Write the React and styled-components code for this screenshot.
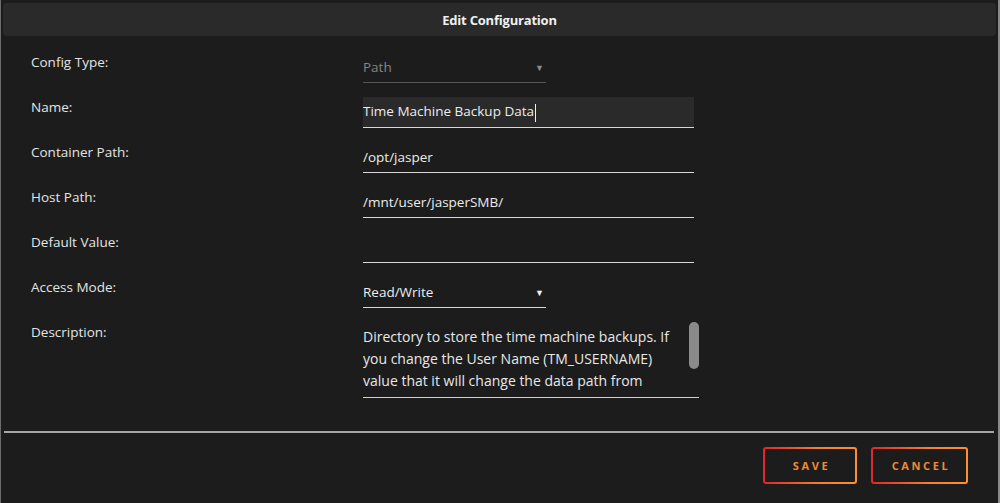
import React from 'react'
import styled, { createGlobalStyle } from 'styled-components'

const GlobalStyle = createGlobalStyle`
  html, body {
    margin: 0;
    padding: 0;
    background: #1c1c1c;
  }
  body {
    font-family: "Open Sans", "Noto Sans", sans-serif;
  }
`

const Dialog = styled.div`
  width: 1000px;
  height: 503px;
  box-sizing: border-box;
  border-left: 1px solid #6c6c6c;
  border-right: 2px solid #8a8a8a;
  background: #1c1c1c;
  padding: 3px 2px 0 2px;
  display: flex;
  flex-direction: column;
`

const TitleBar = styled.div`
  height: 33px;
  flex-shrink: 0;
  background: #2a2a2a;
  border-radius: 4px;
  display: flex;
  align-items: center;
  justify-content: center;
  color: #f0f0f0;
  font-size: 13px;
  font-weight: 700;
  letter-spacing: -0.2px;
`

const Form = styled.div`
  padding: 16px 0 0 28px;
  display: flex;
  flex-direction: column;
  gap: 14px;
  height: 395px;
  flex-shrink: 0;
  box-sizing: border-box;
`

const Row = styled.div`
  display: grid;
  grid-template-columns: 332px 1fr;
  align-items: start;
`

const Label = styled.div`
  color: #e4e4e4;
  font-size: 13.5px;
  line-height: 20px;
`

const Field = styled.div`
  width: ${p => p.$w || 331}px;
  height: 31px;
  box-sizing: border-box;
  display: flex;
  align-items: center;
  justify-content: space-between;
  background: ${p => (p.$focus ? '#2a2a2a' : 'transparent')};
  border-bottom: ${p => (p.$disabled ? '1px solid #555' : '1px solid #d8d8d8')};
  color: ${p => (p.$disabled ? '#858585' : '#ececec')};
  font-size: 13.5px;
  padding-right: 2px;
`

const Caret = styled.span`
  display: inline-block;
  vertical-align: middle;
  width: 1px;
  height: 18px;
  background: #f0f0f0;
  margin-left: 1px;
`

const Arrow = styled.span`
  font-size: 9px;
  color: ${p => (p.$disabled ? '#8a8a8a' : '#f0f0f0')};
`

const TextArea = styled.div`
  position: relative;
  width: 336px;
  height: 76px;
  box-sizing: border-box;
  padding: 4px 22px 0 0;
  border-bottom: 1px solid #d0d0d0;
  color: #e8e8e8;
  font-size: 14px;
  line-height: 22px;
  overflow: hidden;
`

const Thumb = styled.div`
  position: absolute;
  right: 0;
  top: 0;
  width: 10px;
  height: 47px;
  border-radius: 5px;
  background: #8a8a8a;
`

const Divider = styled.div`
  height: 2px;
  flex-shrink: 0;
  background: #a6a6a6;
  margin: 0 2px 0 1px;
`

const Footer = styled.div`
  display: flex;
  justify-content: flex-end;
  gap: 14px;
  padding: 14px 28px 0 0;
`

const Button = styled.button`
  width: ${p => p.$w}px;
  height: 37px;
  box-sizing: border-box;
  border: 2px solid transparent;
  border-radius: 3px;
  background:
    linear-gradient(#1c1c1c, #1c1c1c) padding-box,
    linear-gradient(90deg, #e0262c, #f48030 60%, #ff8f30) border-box;
  color: #f08a38;
  font-family: "Open Sans", "Noto Sans", sans-serif;
  font-size: 11px;
  font-weight: 700;
  letter-spacing: 2.6px;
  padding: 0 0 0 3px;
  cursor: pointer;
`

const rows = [
  { label: 'Config Type:', value: 'Path', select: true, disabled: true, w: 183 },
  { label: 'Name:', value: 'Time Machine Backup Data', focus: true },
  { label: 'Container Path:', value: '/opt/jasper' },
  { label: 'Host Path:', value: '/mnt/user/jasperSMB/' },
  { label: 'Default Value:', value: '' },
  { label: 'Access Mode:', value: 'Read/Write', select: true, w: 183 },
]

export default function App() {
  return (
    <>
      <GlobalStyle />
      <Dialog>
        <TitleBar>Edit Configuration</TitleBar>
        <Form>
          {rows.map(r => (
            <Row key={r.label}>
              <Label>{r.label}</Label>
              <Field $w={r.w} $focus={r.focus} $disabled={r.disabled}>
                <span>
                  {r.value}
                  {r.focus && <Caret />}
                </span>
                {r.select && <Arrow $disabled={r.disabled}>▼</Arrow>}
              </Field>
            </Row>
          ))}
          <Row>
            <Label>Description:</Label>
            <TextArea>
              Directory to store the time machine backups. If you change the User Name (TM_USERNAME) value that it will change the data path from
              <Thumb />
            </TextArea>
          </Row>
        </Form>
        <Divider />
        <Footer>
          <Button $w={94}>SAVE</Button>
          <Button $w={97}>CANCEL</Button>
        </Footer>
      </Dialog>
    </>
  )
}
